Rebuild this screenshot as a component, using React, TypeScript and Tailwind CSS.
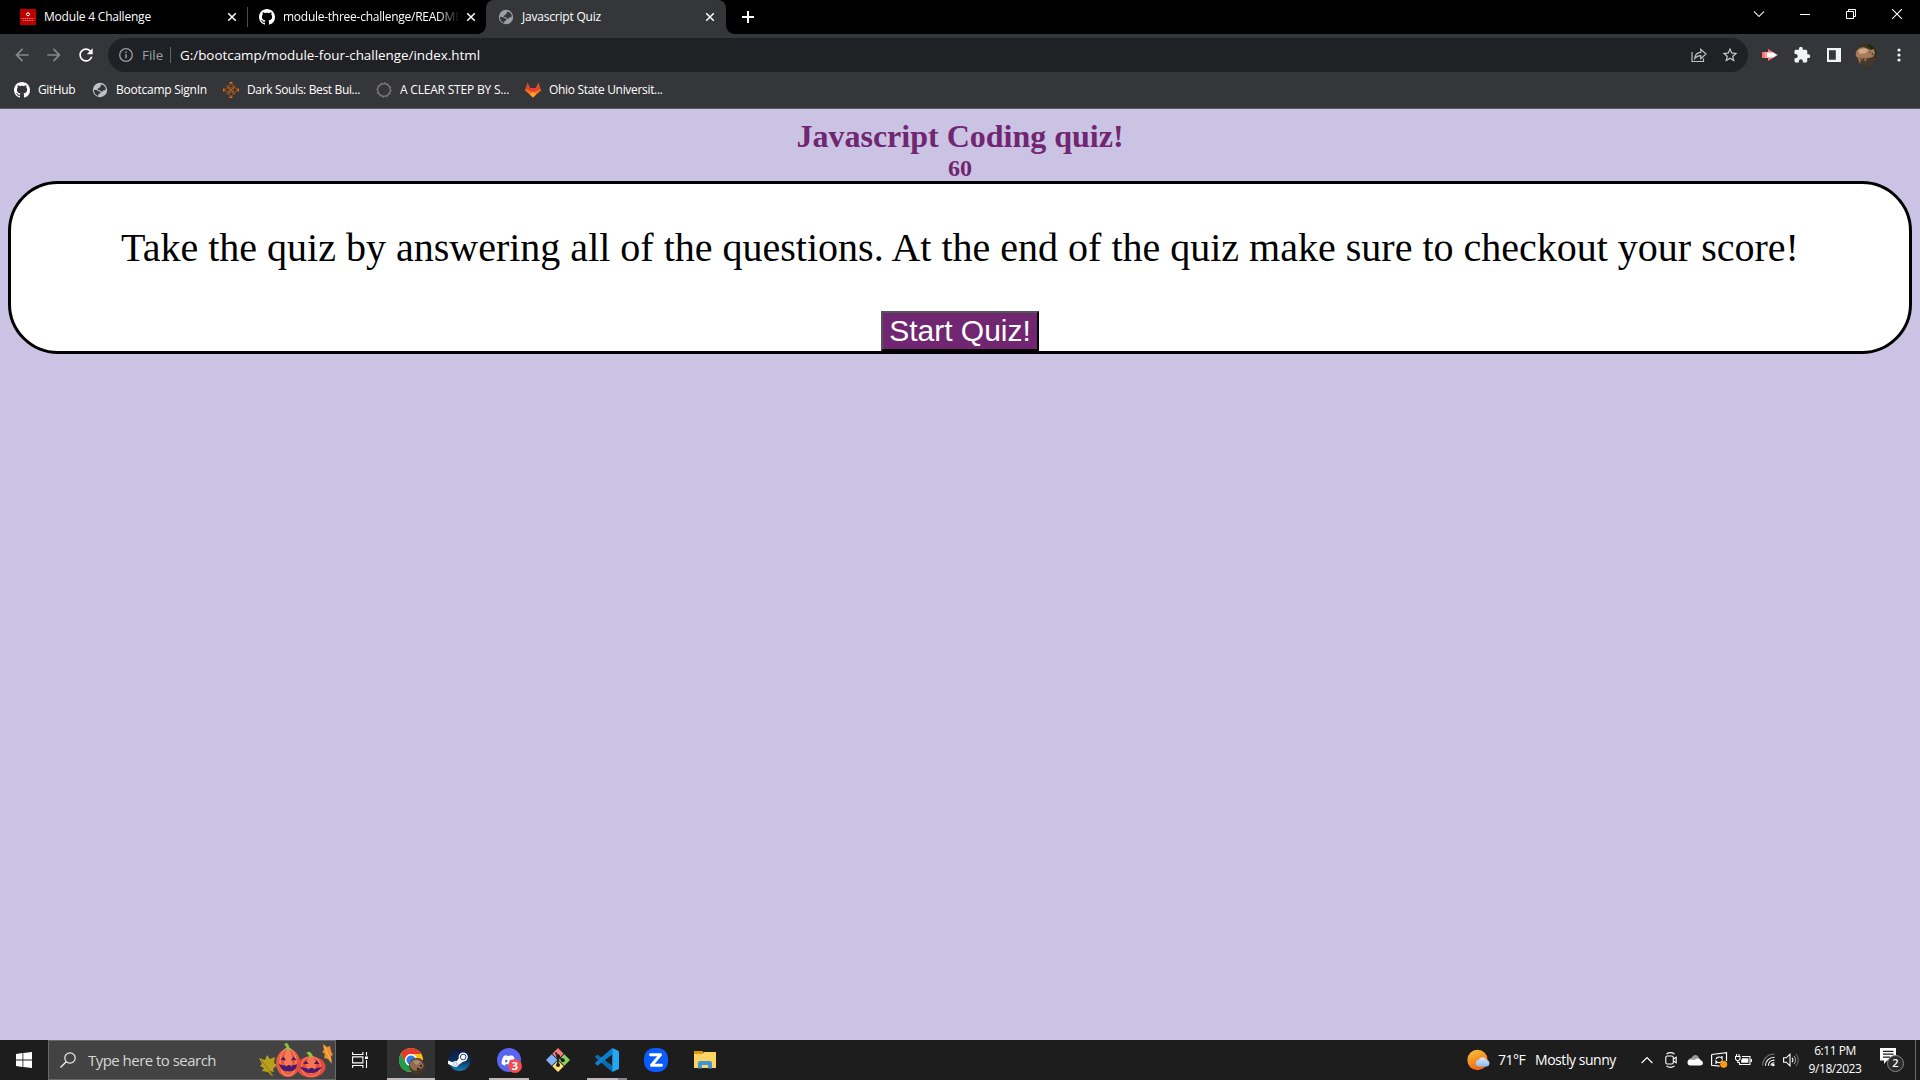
import type { ReactNode } from "react";
import { MdExtension, MdStarBorder, MdRefresh, MdArrowBack, MdArrowForward } from "react-icons/md";
import { FaDiscord } from "react-icons/fa";

function GitHubMark() {
  return (
    <svg viewBox="0 0 16 16" className="size-4 shrink-0">
      <path
        fill="#fff"
        d="M8 0C3.58 0 0 3.58 0 8c0 3.54 2.29 6.53 5.47 7.59.4.07.55-.17.55-.38 0-.19-.01-.82-.01-1.49-2.01.37-2.53-.49-2.69-.94-.09-.23-.48-.94-.82-1.13-.28-.15-.68-.52-.01-.53.63-.01 1.08.58 1.23.82.72 1.21 1.87.87 2.33.66.07-.52.28-.87.51-1.07-1.78-.2-3.64-.89-3.64-3.95 0-.87.31-1.59.82-2.15-.08-.2-.36-1.02.08-2.12 0 0 .67-.21 2.2.82.64-.18 1.32-.27 2-.27s1.36.09 2 .27c1.53-1.04 2.2-.82 2.2-.82.44 1.1.16 1.92.08 2.12.51.56.82 1.27.82 2.15 0 3.07-1.87 3.75-3.65 3.95.29.25.54.73.54 1.48 0 1.07-.01 1.93-.01 2.2 0 .21.15.46.55.38A8.01 8.01 0 0 0 16 8c0-4.42-3.58-8-8-8z"
      />
    </svg>
  );
}

function GlobeIcon({ className }: { className: string }) {
  return (
    <svg viewBox="0 0 16 16" className={className}>
      <circle cx="8" cy="8" r="7.2" fill="currentColor" />
      <path
        d="M8.6 2.4c2.4.2 4.3 1.5 5.1 3.6l-.3 2.2-2 .1-1.2 1.4-1.6-.2-.4-1.3-2.6-.3.3-1.5 1.7-.4.2-1.4 1.5-.4zM1.9 7.8l3.2.5 1.6 1 1.8.8-.3 1.3-1.7.6-.4 1.9C3.6 13.1 1.9 10.9 1.9 7.8z"
        fill="#35363a"
      />
    </svg>
  );
}

function CloseIcon({ className }: { className?: string }) {
  return (
    <svg viewBox="0 0 10 10" className={`size-2.5 shrink-0 text-white ${className ?? ""}`}>
      <path d="M1.2 1.2 8.8 8.8M8.8 1.2 1.2 8.8" stroke="currentColor" strokeWidth="1.5" />
    </svg>
  );
}

function TabStrip() {
  return (
    <div className="flex h-[34px] w-full bg-black text-xs text-white">
      <div className="flex h-[34px] w-[247px] items-center pr-[10px] pl-5">
        <svg viewBox="0 0 16 16" className="size-4 shrink-0">
          <rect width="16" height="16" fill="#bb0000" />
          <circle cx="8" cy="5.3" r="1.5" fill="none" stroke="#fff" strokeWidth="1" />
          <path d="M1.5 9.5h13M3 11.5h10" stroke="#e89a9a" strokeWidth=".8" strokeDasharray="1.2 .6" />
        </svg>
        <span className="ml-2 flex-1 tracking-[-0.2px] whitespace-nowrap">Module 4 Challenge</span>
        <CloseIcon />
      </div>
      <div className="mt-[7px] h-5 w-px bg-[#4a4d51]" />
      <div className="flex h-[34px] w-[238px] items-center pr-[10px] pl-[11px]">
        <GitHubMark />
        <span className="ml-2 w-[176px] overflow-hidden mask-r-from-88% tracking-[-0.26px] whitespace-nowrap">
          module-three-challenge/README
        </span>
        <CloseIcon className="ml-auto" />
      </div>
      <div className="relative flex h-[34px] w-[240px] items-center rounded-t-lg bg-[#35363a] pr-[11px] pl-3">
        <span className="absolute bottom-0 -left-2 size-2 bg-[radial-gradient(circle_at_0_0,#000_7.5px,#35363a_8px)]" />
        <span className="absolute -right-2 bottom-0 size-2 bg-[radial-gradient(circle_at_100%_0,#000_7.5px,#35363a_8px)]" />
        <GlobeIcon className="size-4 shrink-0 text-[#9aa0a6]" />
        <span className="ml-2 flex-1 tracking-[-0.2px] whitespace-nowrap">Javascript Quiz</span>
        <CloseIcon />
      </div>
      <svg viewBox="0 0 12 12" className="mt-[11px] ml-4 size-3">
        <path d="M6 0v12M0 6h12" stroke="#fff" strokeWidth="2" />
      </svg>
      <div className="ml-auto flex h-[28px] items-center">
        <div className="flex w-[46px] justify-center">
          <svg viewBox="0 0 12 12" className="size-3">
            <path d="m1 3.500 5 5 5-5" fill="none" stroke="#ddd" strokeWidth="1.1" />
          </svg>
        </div>
        <div className="flex w-[46px] justify-center">
          <span className="h-px w-2.5 bg-white" />
        </div>
        <div className="flex w-[46px] justify-center">
          <svg viewBox="0 0 10 10" className="size-2.5">
            <path d="M.5 2.5h7v7h-7zM2.5 2.5v-2h7v7h-2" fill="none" stroke="#fff" />
          </svg>
        </div>
        <div className="flex w-[46px] justify-center">
          <svg viewBox="0 0 10 10" className="size-2.5">
            <path d="m0 0 10 10M10 0 0 10" stroke="#fff" strokeWidth="1.1" />
          </svg>
        </div>
      </div>
    </div>
  );
}

function Avatar({ className }: { className: string }) {
  return (
    <svg viewBox="0 0 22 22" className={`shrink-0 rounded-full ${className}`}>
      <rect width="22" height="22" fill="#3d3220" />
      <path d="M11 0h11v10l-6-5z" fill="#1f2b10" />
      <path d="M0 14h22v8H0z" fill="#46382a" />
      <path d="M1 8c2-5 8-6 12-3l3 1 3-1 1 4-2 4-4 1-2 1-2 3-1-4-3 1-1 5-2-6C1 13 0 11 1 8z" fill="#a67a5a" />
      <path d="M3 7c3-3 7-3 10-1l-2 3-6 1z" fill="#d0a885" />
      <path d="M3 13c3 2 7 2 11 0l-2 3-2-1-3 2z" fill="#6e4c36" />
      <path d="m14 8 1.5-.6.3 1.3zM17 9l1.5 1-2 1z" fill="#1d100a" />
    </svg>
  );
}

function Toolbar() {
  return (
    <div className="flex h-[42px] shrink-0 items-center pl-3">
      <MdArrowBack className="size-5 text-[#86888a]" />
      <MdArrowForward className="ml-3 size-5 text-[#86888a]" />
      <MdRefresh className="ml-3 size-5 text-white" />
      <div className="ml-3 flex h-[34px] w-[1640px] items-center rounded-full bg-[#202124] pr-2 pl-[11px] text-[13.4px]">
        <svg viewBox="0 0 14 14" className="size-3.5 text-[#9aa0a6]">
          <circle cx="7" cy="7" r="6.3" fill="none" stroke="currentColor" strokeWidth="1.3" />
          <path d="M7 6.2v4.1M7 3.5V5" stroke="currentColor" strokeWidth="1.5" />
        </svg>
        <span className="ml-[9px] w-[21px] text-[#9aa0a6]">File</span>
        <span className="ml-[7px] h-4 w-px bg-[#5f6368]" />
        <span className="ml-[9px] whitespace-nowrap text-white">G:/bootcamp/module-four-challenge/index.html</span>
        <svg viewBox="0 0 16 16" className="ml-auto size-4 text-[#bdc1c6]">
          <path
            d="M1 5v9.500h11.500v-3M3.800 11.500c.3-3.900 2.600-6 6-6.200V2.300L15 7l-5.200 4.600V8.600c-2.500 0-4.500 1-6 2.900z"
            fill="none"
            stroke="currentColor"
            strokeWidth="1.2"
          />
        </svg>
        <MdStarBorder className="mr-px ml-[14px] size-[18px] text-[#c8cbcf]" />
      </div>
      <svg viewBox="0 0 16 14" className="ml-[14px] h-3.5 w-4">
        <path d="M0 4h6V1l10 6-10 6v-3H0z" fill="#ff7378" />
        <path d="M5 4.500h6L15 7l-4 2.500H5z" fill="#fff" />
        <path d="M3 4h1.500v6H3z" fill="#ffaaad" />
      </svg>
      <MdExtension className="ml-[15px] size-[18px] text-[#f1f3f4]" />
      <svg viewBox="0 0 14 14" className="ml-4 size-3.5">
        <path d="M0 0h14v14H0zM2 2.200v9.600h6.800V2.200z" fill="#f1f3f4" fillRule="evenodd" />
      </svg>
      <Avatar className="ml-[14px] size-[22px]" />
      <svg viewBox="0 0 4 14" className="ml-[20px] h-3.5 w-1">
        <circle cx="2" cy="2" r="1.6" fill="#f1f3f4" />
        <circle cx="2" cy="7" r="1.6" fill="#f1f3f4" />
        <circle cx="2" cy="12" r="1.6" fill="#f1f3f4" />
      </svg>
    </div>
  );
}

function Bookmark({ icon, label, className }: { icon: ReactNode; label: string; className: string }) {
  return (
    <div className={`flex items-center gap-2 whitespace-nowrap ${className}`}>
      {icon}
      <span>{label}</span>
    </div>
  );
}

function BookmarksBar() {
  return (
    <div className="flex h-[32px] items-center pb-1 pl-3.5 text-xs text-white">
      <Bookmark icon={<GitHubMark />} label="GitHub" className="w-[78px] tracking-[-0.4px]" />
      <Bookmark
        icon={<GlobeIcon className="size-4 text-[#bdc1c6]" />}
        label="Bootcamp SignIn"
        className="w-[131px] tracking-[-0.25px]"
      />
      <Bookmark
        icon={
          <svg viewBox="0 0 16 16" className="size-4 shrink-0">
            <g fill="none" stroke="#b5591a" strokeWidth="1">
              <path d="m3.500 3.500 9 9M12.500 3.500l-9 9" />
              <path d="M8 1.500 10.500 4 8 6.500 5.500 4zM8 9.500l2.500 2.500L8 14.500 5.500 12zM1.500 8 4 5.500 6.500 8 4 10.500zM9.500 8 12 5.500 14.500 8 12 10.500z" />
            </g>
            <path d="M6.500 0h3v1.500h-3zM6.500 14.500h3V16h-3zM0 6.500h1.500v3H0zM14.500 6.500H16v3h-1.500z" fill="#e2701e" />
          </svg>
        }
        label="Dark Souls: Best Bui..."
        className="w-[153px] tracking-[-0.35px]"
      />
      <Bookmark
        icon={
          <svg viewBox="0 0 16 16" className="size-4 shrink-0">
            <circle cx="8" cy="8" r="6.3" fill="none" stroke="#85817a" strokeWidth="1.2" />
            <circle cx="8" cy="8" r="7.5" fill="none" stroke="#77736c" strokeWidth="1" strokeDasharray="1.5 2.4" />
          </svg>
        }
        label="A CLEAR STEP BY S..."
        className="w-[149px] tracking-[-0.2px]"
      />
      <Bookmark
        icon={
          <svg viewBox="0 0 16 16" className="size-4 shrink-0">
            <path d="M2.600.8 5 6h6L13.400.8 16 8.600 8 15.600 0 8.600z" fill="#fc6d26" />
            <path d="M2.600.8 5 6h6L13.400.8 15.300 7 8 10.500.7 7z" fill="#e24329" />
            <path d="m4.800 12.300 3.200-2.500 3.200 2.500L8 15.600z" fill="#fca326" />
          </svg>
        }
        label="Ohio State Universit..."
        className="tracking-[-0.32px]"
      />
    </div>
  );
}

function QuizPage() {
  return (
    <main className="flex-1 bg-[#cbc3e3] px-2 pt-[9px] text-center font-['Liberation_Serif',serif]">
      <h1 className="text-[32px] leading-[37px] font-bold text-[#702670]">Javascript Coding quiz!</h1>
      <h2 className="text-2xl leading-[26px] font-bold text-[#702670]">60</h2>
      <section className="flex h-[173px] flex-col items-center rounded-[50px] border-[3px] border-black bg-white">
        <p className="mt-10 text-[40px] leading-[47px] whitespace-nowrap text-black">
          Take the quiz by answering all of the questions. At the end of the quiz make sure to checkout your score!
        </p>
        <button className="mt-10 h-10 w-[158px] border-2 border-t-[#555] border-r-black border-b-black border-l-[#555] bg-[#702670] font-['Liberation_Sans',sans-serif] text-[30px] leading-[34px] whitespace-nowrap text-white">
          Start Quiz!
        </button>
      </section>
    </main>
  );
}

function Pumpkins() {
  return (
    <svg viewBox="0 0 78 36" className="h-9 w-[78px]">
      <path d="m2 16 6 2 2-5 3 4 5-2-1 6 3 2-4 4 1 3-4-1 3 6-5-5-6-1 2-3-4-2 2-2z" fill="#b9a01c" />
      <path d="m4 18 13 16" stroke="#7c6a10" strokeWidth=".8" />
      <path d="m66 2 4 3 3-1 1 5 2 4-2 1 1 8-4-5-4-1 1-4-3-2 2-2z" fill="#f0902c" />
      <path d="m67 4 7 15" stroke="#ffc25e" strokeWidth=".9" />
      <ellipse cx="31" cy="21" rx="12" ry="14" fill="#e9573c" />
      <ellipse cx="31" cy="20" rx="8" ry="13.6" fill="none" stroke="#f98a66" strokeWidth="1.2" />
      <ellipse cx="31" cy="19" rx="4" ry="12" fill="#f77b57" />
      <path d="M30 9c0-3-1-5-3-7l3-1c2 2 3 5 3 8z" fill="#8cc63f" />
      <path d="m23.500 18 3-3.500 2.500 4zM34 18.500l2.500-4 3 3.500z" fill="#4a1a70" />
      <path d="M22 21.500c2 2 5 2 6 1.500l1.500 1.500L31 23h2l1.500 1.500L36 23c2 0 3-.5 5-1.500-1 5-4 8-9.500 8s-8.500-3-9.500-8z" fill="#4a1a70" />
      <ellipse cx="54" cy="25" rx="14.5" ry="10.5" fill="#e34c3c" />
      <ellipse cx="54" cy="24.5" rx="9.5" ry="10" fill="none" stroke="#fb8261" strokeWidth="1.2" />
      <ellipse cx="54" cy="23.5" rx="5" ry="9" fill="#fa7350" />
      <path d="M52 15c0-2-1-3-3-4l3-1.500c2 1 4 3 4 6z" fill="#8cc63f" />
      <path d="m46 22 3-3.500 2.500 3.500zM57 22l2.500-3.500 3 3.500z" fill="#4a1a70" />
      <path d="M43 24.500c3 1.500 5 1.500 7 1.500l1.500 1.500L53 26h3l1.500 1.500L59 26c2 0 4 0 6-1.500-2 4-6 6.500-11 6.500s-9-2.500-11-6.500z" fill="#4a1a70" />
    </svg>
  );
}

function ChromeIcon() {
  return (
    <div className="relative size-6">
      <svg viewBox="0 0 24 24" className="size-6">
        <circle cx="12" cy="12" r="12" fill="#fbc116" />
        <path d="M12 0a12 12 0 0 1 10.400 6H12a6 6 0 0 0-5.200 9L1.600 6A12 12 0 0 1 12 0z" fill="#e33b2e" />
        <path d="M1.600 6 6.800 15A6 6 0 0 0 12 18l2-.3L11.300 24A12 12 0 0 1 1.600 6z" fill="#1f9d4d" />
        <circle cx="12" cy="12" r="6" fill="#fff" />
        <circle cx="12" cy="12" r="4.6" fill="#2f7de9" />
      </svg>
      <svg viewBox="0 0 16 16" className="absolute top-2.5 left-2.5 size-4">
        <circle cx="8" cy="8" r="8" fill="#4b3626" />
        <path d="M1 5c3-5 9-5 12-1l2 4-3 3-3-1-2 3-3-1-3-3z" fill="#8d6a50" />
        <path d="M4 4c2-2 5-2 7 0l-3 3z" fill="#b08d70" />
        <path d="M11 7h2v1.500h-2zM8 10h2v1H8z" fill="#1d120c" />
      </svg>
    </div>
  );
}

function SteamIcon() {
  return (
    <svg viewBox="0 0 24 24" className="size-6">
      <defs>
        <linearGradient id="steam" x1="0" y1="0" x2="0" y2="1">
          <stop offset="0" stopColor="#101a3c" />
          <stop offset=".5" stopColor="#0d2b5c" />
          <stop offset="1" stopColor="#1580b8" />
        </linearGradient>
      </defs>
      <circle cx="12.5" cy="12" r="11" fill="url(#steam)" />
      <path d="m1 12.500 7 3 5.500-7.500 3.500 5L10 18z" fill="#fff" />
      <path d="M1 12.500V16l6 2.500 1-3z" fill="#fff" />
      <circle cx="8.5" cy="16" r="3" fill="#fff" />
      <circle cx="16.2" cy="9" r="4.600" fill="#fff" />
      <circle cx="16.2" cy="9" r="2.8" fill="#fff" stroke="#17345f" strokeWidth=".9" />
      <circle cx="8.5" cy="16" r="1.7" fill="none" stroke="#7890b0" strokeWidth=".7" />
    </svg>
  );
}

function DiscordIcon() {
  return (
    <div className="relative flex size-6 items-center justify-center rounded-full bg-[#5865f2]">
      <FaDiscord className="mr-0.5 size-[15px] text-white" />
      <span className="absolute top-[11px] left-[11px] flex size-3.5 items-center justify-center rounded-full bg-[#ed4f50] text-[11px] font-bold text-white">
        3
      </span>
    </div>
  );
}

function GitIcon() {
  return (
    <svg viewBox="0 0 24 24" className="size-6">
      <path d="m12 0 5.700 5.700L12 11.400 6.300 5.700z" fill="#f47b7b" />
      <path d="m5.700 6.300 5.700 5.700-5.700 5.700L0 12z" fill="#80b3ff" />
      <path d="M18.300 6.300 24 12l-5.700 5.700-5.700-5.700z" fill="#87d561" />
      <path d="m12 12.600 5.700 5.700L12 24l-5.700-5.700z" fill="#ffe178" />
      <path d="M9.500 4.500 12 8v9M12 8l5 4.500" fill="none" stroke="#231f20" strokeWidth="1.7" />
      <circle cx="12" cy="8.3" r="2" fill="#231f20" />
      <circle cx="12" cy="17" r="2" fill="#231f20" />
      <circle cx="16.8" cy="12.3" r="2" fill="#231f20" />
    </svg>
  );
}

function CodeIcon() {
  return (
    <svg viewBox="0 0 24 24" className="size-6">
      <path d="M.3 8.500 1.900 7a1 1 0 0 1 1.200 0L17.300 17.700V24L.3 9.600a.8.800 0 0 1 0-1.100z" fill="#0a6cb4" />
      <path d="M1.900 17.200.3 15.700a.8.800 0 0 1 0-1.100L17.300 0v6.500L3.100 17.200a1 1 0 0 1-1.200 0z" fill="#0f7fcb" />
      <path d="m17.300 0 5.500 2.400c.7.300 1.200 1 1.200 1.700v15.800c0 .7-.5 1.400-1.200 1.700L17.300 24z" fill="#25a7f2" />
    </svg>
  );
}

function ExplorerIcon() {
  return (
    <svg viewBox="0 0 22 18" className="h-[18px] w-[22px]">
      <path d="M0 0h8.500l1.500 2v3H0z" fill="#dd9a0d" />
      <path d="M0 3h9l1-2h12v16H0z" fill="#ffd463" />
      <path d="M4 17.500V12a2 2 0 0 1 2-2h10a2 2 0 0 1 2 2v5.500h-4V14H8v3.500z" fill="#3e97d9" />
    </svg>
  );
}

function TaskSlot({ children, className }: { children: ReactNode; className?: string }) {
  return <div className={`flex h-10 w-12 shrink-0 items-center justify-center ${className ?? ""}`}>{children}</div>;
}

function Taskbar() {
  return (
    <footer className="flex h-10 items-center bg-[#1d1d1d] text-white">
      <div className="flex w-12 justify-center">
        <svg viewBox="0 0 16 16" className="size-4">
          <path d="M0 2 6.500 1.100v6.500H0zM7.300 1 16 0v7.600H7.300zM0 8.400h6.500v6.500L0 14zM7.300 8.400H16V16l-8.700-1z" fill="#fff" />
        </svg>
      </div>
      <div className="flex h-10 w-[288px] items-center border border-[#696969] bg-[#434343] pl-[11px]">
        <svg viewBox="0 0 16 16" className="size-4">
          <circle cx="10" cy="6" r="5.2" fill="none" stroke="#eee" strokeWidth="1.2" />
          <path d="M6.200 9.800.5 15.500" stroke="#eee" strokeWidth="1.3" />
        </svg>
        <span className="ml-3 text-[15px] tracking-[-0.53px] whitespace-nowrap text-[#d6d6d6]">Type here to search</span>
        <div className="ml-auto">
          <Pumpkins />
        </div>
      </div>
      <div className="flex w-[51px] justify-center pr-[3px]">
        <svg viewBox="0 0 16 16" className="size-4" fill="none" stroke="#fff" strokeWidth="1.1">
          <path d="M.6 0v2.500h10.300V0M.6 16v-2.500h10.300V16M.6 4.900h10.300v6H.6zM14.500 0v3.500M14.500 8v8" />
          <path d="M13 4.500h3v2.500h-3z" fill="#fff" stroke="none" />
        </svg>
      </div>
      <div className="flex h-10 w-12 flex-col items-center bg-[#323232]">
        <div className="flex flex-1 items-center pt-0.5">
          <ChromeIcon />
        </div>
        <div className="h-0.5 w-full bg-[#bfb8bc]" />
      </div>
      <TaskSlot>
        <SteamIcon />
      </TaskSlot>
      <div className="ml-[6px] flex h-10 w-10 flex-col items-center">
        <div className="flex flex-1 items-center pt-0.5">
          <DiscordIcon />
        </div>
        <div className="h-0.5 w-full bg-[#bfb8bc]" />
      </div>
      <TaskSlot className="ml-[5px]">
        <GitIcon />
      </TaskSlot>
      <div className="ml-[5px] flex h-10 w-10 flex-col items-center">
        <div className="flex flex-1 items-center pt-0.5">
          <CodeIcon />
        </div>
        <div className="flex h-0.5 w-full">
          <span className="w-[31px] bg-[#bfb8bc]" />
          <span className="flex-1 bg-[#8a8688]" />
        </div>
      </div>
      <TaskSlot className="ml-[5px]">
        <svg viewBox="0 0 24 24" className="size-6">
          <rect width="24" height="24" rx="10" fill="#0b5cff" />
          <path
            d="M6.500 6.700h10L7.500 17.300h10"
            fill="none"
            stroke="#fff"
            strokeWidth="2.9"
            strokeLinejoin="round"
            strokeLinecap="round"
          />
        </svg>
      </TaskSlot>
      <TaskSlot className="ml-px">
        <ExplorerIcon />
      </TaskSlot>
      <SystemTray />
    </footer>
  );
}

function SystemTray() {
  return (
    <div className="ml-auto flex h-10 items-center">
      <svg viewBox="0 0 24 22" className="h-[22px] w-6">
        <defs>
          <linearGradient id="sun" x1=".2" y1="0" x2=".6" y2="1">
            <stop offset="0" stopColor="#f7bf3b" />
            <stop offset="1" stopColor="#ee6410" />
          </linearGradient>
          <linearGradient id="cloud" x1="0" y1="0" x2="0" y2="1">
            <stop offset="0" stopColor="#dce9fb" />
            <stop offset="1" stopColor="#8db8f2" />
          </linearGradient>
        </defs>
        <circle cx="10.5" cy="11" r="10.2" fill="url(#sun)" />
        <path d="M11.500 17.500a3.300 3.300 0 0 1 0-6.500 4.500 4.500 0 0 1 8.300 0 3.300 3.300 0 0 1-.3 6.500z" fill="url(#cloud)" />
      </svg>
      <span className="ml-[7px] w-[37px] text-sm tracking-[-0.5px] whitespace-nowrap">71°F</span>
      <span className="w-[106px] text-sm tracking-[-0.45px] whitespace-nowrap">Mostly sunny</span>
      <svg viewBox="0 0 12 8" className="h-2 w-3">
        <path d="m.6 7 5.400-5.400L11.400 7" fill="none" stroke="#fff" strokeWidth="1.2" />
      </svg>
      <svg viewBox="0 0 12 16" className="ml-[12px] h-4 w-3" fill="none" stroke="#fff" strokeWidth="1.1">
        <rect x=".8" y="4" width="7.5" height="8" rx="1.5" />
        <path d="m8.500 7 2.700-1.800v5.600L8.500 9M1.500 2C4 .3 7 .3 9.500 2M1.500 14c2.500 1.700 5.500 1.700 8 0" />
      </svg>
      <svg viewBox="0 0 16 12" className="ml-[10px] h-3 w-4">
        <path d="M1 8C1 5 3 4 4.500 4 6 0 11 0 12 4l3 3-6 3z" fill="#9b9b9b" />
        <path d="M3.500 11.500a3 3 0 0 1 0-6L7 6l3-1.500c2 0 3 .8 3.500 2a2.500 2.500 0 0 1 0 5z" fill="#fff" />
      </svg>
      <svg viewBox="0 0 17 16" className="ml-2 h-4 w-[17px]">
        <path d="M.6 2.500 15.500.7V9M.6 2.500v10.800l8 .8" fill="none" stroke="#fff" strokeWidth="1.2" />
        <path d="M5 7c.5-2 4.500-3 6-.5V4M11 8.500c-.5 2.500-4.500 3-6 .7V12" fill="none" stroke="#fff" strokeWidth="1.2" />
        <circle cx="12.7" cy="12.3" r="3.5" fill="#ff9a0a" />
      </svg>
      <svg viewBox="0 0 17 12" className="ml-[7px] h-3 w-[17px]" fill="none" stroke="#fff" strokeWidth="1.1">
        <path d="M7 2.500h8v8H4.500V8.500M16.400 5v3M1.500 0v2.500M4 0v2.500M.5 2.500H5V5L3.700 6.500H1.800L.5 5zM2.800 6.500v2h2" />
        <path d="M7.200 4.200h6.200v4.600H6.200V6.500z" fill="#fff" stroke="none" />
      </svg>
      <svg viewBox="0 0 13 14" className="ml-[10px] h-3.5 w-[13px]" fill="none" strokeWidth="1.1">
        <path d="M.7 12.500C.7 6 5.500 1 12.500 1" stroke="#777" />
        <path d="M3.500 12.800c0-4.800 3.600-8.600 9-8.600M6.300 12.800c0-3.300 2.500-5.700 6.200-5.700M9 12.800c0-1.800 1.500-3 3.500-3" stroke="#fff" />
        <circle cx="11.3" cy="12" r="1.3" fill="#fff" />
      </svg>
      <svg viewBox="0 0 16 14" className="ml-2 h-3.5 w-4" fill="none" strokeWidth="1.1">
        <path d="M.6 4.800h2.700L7 1.200v11.600L3.300 9.200H.6zM9 4.800c1 1.200 1 3.200 0 4.400" stroke="#fff" />
        <path d="M11 3c2 2.300 2 5.700 0 8" stroke="#aaa" />
        <path d="M13 1c3 3.500 3 8.500 0 12" stroke="#666" />
      </svg>
      <div className="ml-2 flex w-[56px] flex-col items-center text-xs leading-[18px] tracking-[-0.45px] whitespace-nowrap">
        <span>6:11 PM</span>
        <span>9/18/2023</span>
      </div>
      <div className="relative ml-[17px] h-6 w-6">
        <svg viewBox="0 0 16 16" className="size-4">
          <path d="M0 0h16v12.500H7L4 16v-3.500H0z" fill="#fff" />
          <path d="M3 3.300h10.500M3 6.200h10.500M3 9.200h7" stroke="#1d1d1d" strokeWidth="1.2" />
        </svg>
        <span className="absolute top-[7px] left-[7px] flex size-[17px] items-center justify-center rounded-full border border-[#888] bg-[#2d2d2d] text-[11px] font-semibold">
          2
        </span>
      </div>
      <div className="ml-[11px] h-10 w-px bg-[#6a6a6a]" />
      <div className="w-1" />
    </div>
  );
}

export default function App() {
  return (
    <div className="flex h-[1080px] w-[1920px] flex-col overflow-hidden font-['Open_Sans',sans-serif]">
      <TabStrip />
      <div className="flex h-[75px] flex-col border-b border-[#5b5b60] bg-[#35363a]">
        <Toolbar />
        <BookmarksBar />
      </div>
      <QuizPage />
      <Taskbar />
    </div>
  );
}
